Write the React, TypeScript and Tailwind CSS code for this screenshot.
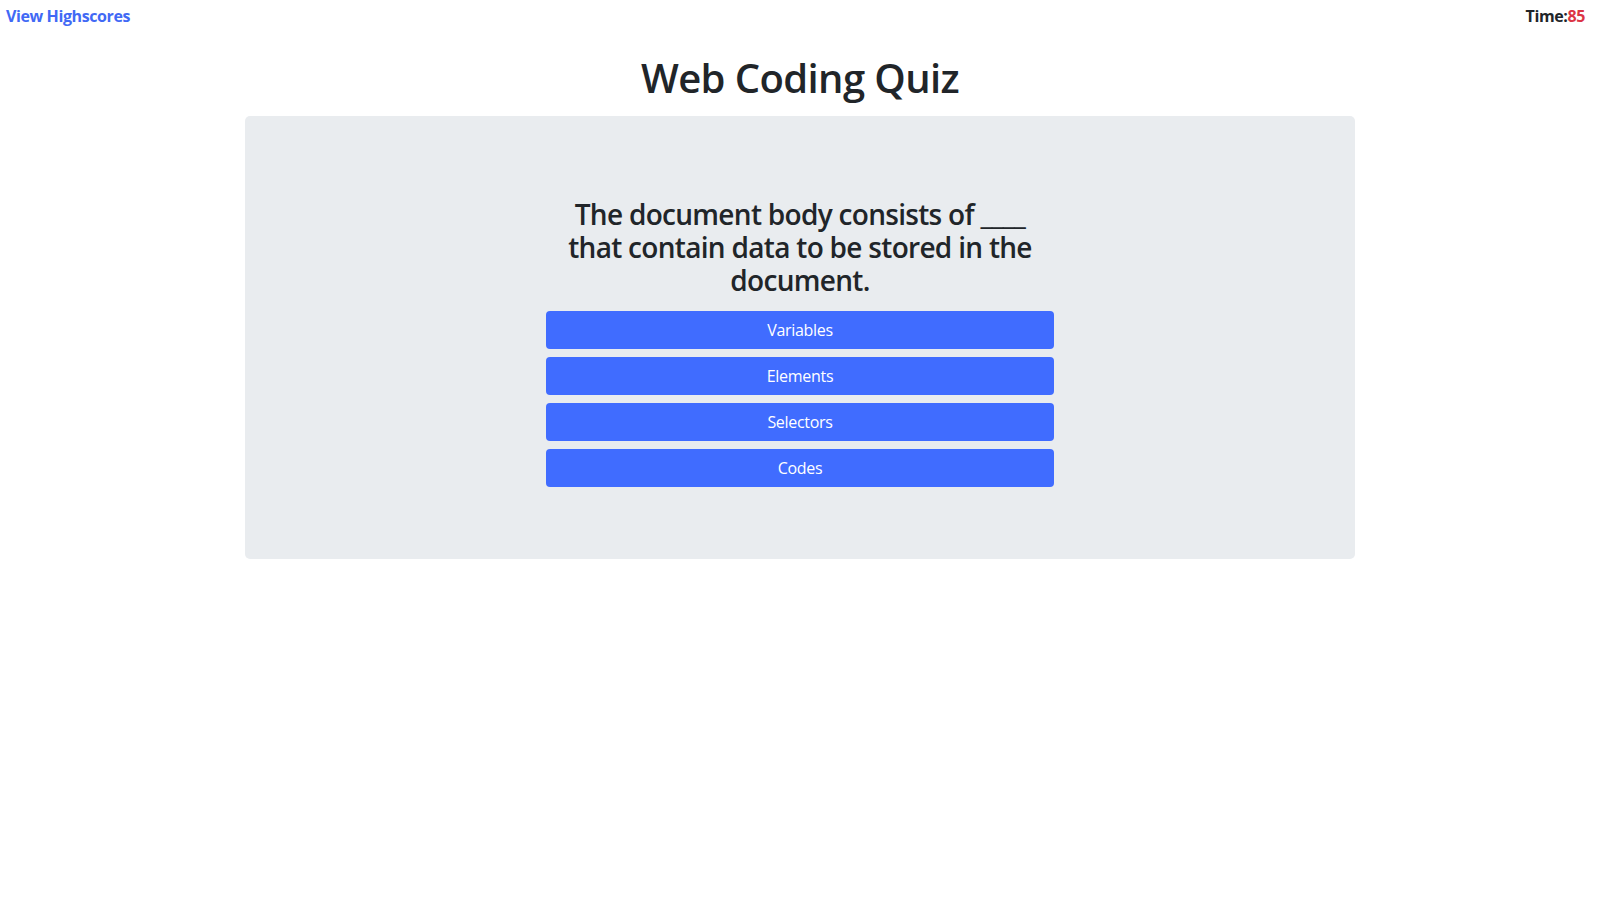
import React from "react";

export default function App() {
  const answers = ["Variables", "Elements", "Selectors", "Codes"];
  return (
    <div
      className="min-h-screen bg-white text-[#212529]"
      style={{ fontFamily: '"Open Sans", "Noto Sans", sans-serif' }}
    >
      <div className="flex justify-between items-start pl-[6px] pr-[15px] pt-[4px] h-[24px] text-[16px] leading-[24px] font-bold tracking-[-0.4px]">
        <a className="text-[#4169f5] cursor-pointer">View Highscores</a>
        <div>
          Time:<span className="text-[#dc3545]">85</span>
        </div>
      </div>
      <h1 className="text-center text-[40px] leading-[48px] font-semibold tracking-[-0.6px] mt-[30px] mb-[14px]">
        Web Coding Quiz
      </h1>
      <div className="mx-auto w-[1110px] bg-[#e9ecef] rounded-[5px] px-[32px] pt-[82px] pb-[64px]">
        <div className="mx-auto w-[508px] flex flex-col">
          <h3 className="text-center text-[28px] leading-[33px] font-semibold tracking-[-0.7px] mb-[14px]">
            The document body consists of ____ that contain data to be stored in the document.
          </h3>
          {answers.map((a) => (
            <button
              key={a}
              className="h-[38px] mb-[8px] rounded-[4px] bg-[#406cff] text-white text-[16px] leading-[24px] tracking-[-0.3px]"
            >
              {a}
            </button>
          ))}
        </div>
      </div>
    </div>
  );
}
